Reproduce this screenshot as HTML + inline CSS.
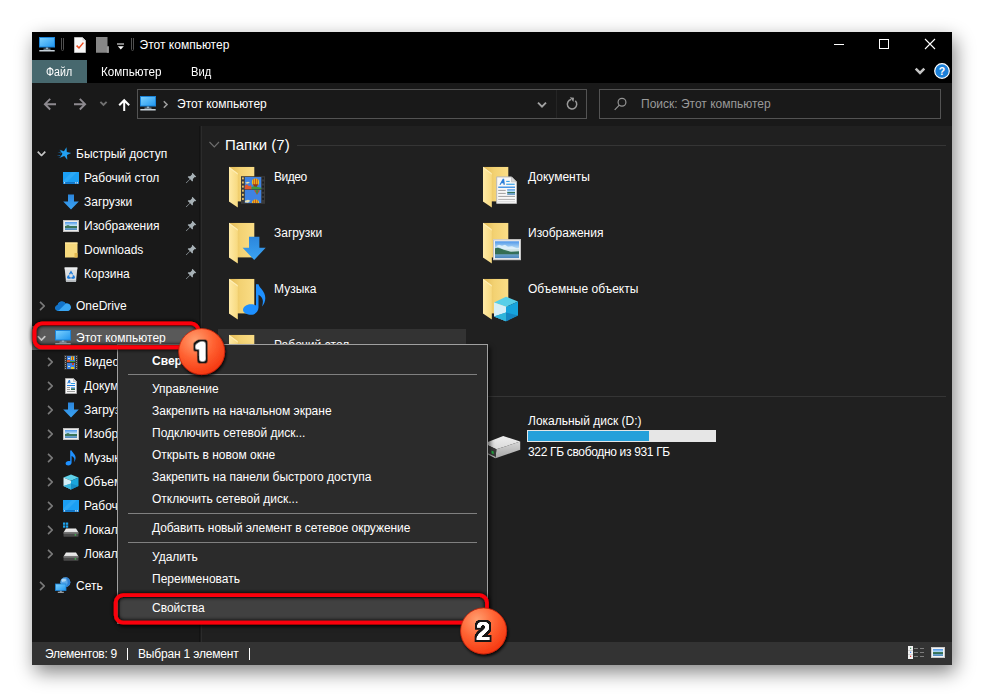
<!DOCTYPE html>
<html lang="ru">
<head>
<meta charset="utf-8">
<title>Этот компьютер</title>
<style>
html,body{margin:0;padding:0;}
body{width:984px;height:697px;background:#fff;position:relative;overflow:hidden;font-family:"Liberation Sans",sans-serif;font-size:12px;color:#fff;}
.t{position:absolute;white-space:nowrap;line-height:14px;color:#fff;}
#shadow{position:absolute;left:32px;top:32px;width:920px;height:633px;box-shadow:3px 7px 18px rgba(0,0,0,.49);}
#win{position:absolute;left:32px;top:32px;width:920px;height:633px;background:#202020;overflow:hidden;}
#titlebar{position:absolute;left:0;top:0;width:920px;height:51px;background:#000;}
#filetab{position:absolute;left:0;top:28px;width:55px;height:23px;background:#47686e;}
#addr{position:absolute;left:0;top:51px;width:920px;height:43px;background:#191919;}
#abox{position:absolute;left:105px;top:57px;width:450px;height:30px;border:1px solid #535353;box-sizing:border-box;}
#abox i{position:absolute;left:418px;top:0;width:1px;height:28px;background:#252525;}
#sbox{position:absolute;left:567px;top:57px;width:342px;height:30px;border:1px solid #535353;box-sizing:border-box;}
#nav{position:absolute;left:0;top:94px;width:167px;height:516px;background:#191919;}
#navsel{position:absolute;left:0;top:294px;width:169px;height:24px;background:#595959;}
#split{position:absolute;left:167px;top:94px;width:3px;height:516px;background:linear-gradient(to right,#131313 0,#131313 1px,#1c1c1c 1px,#1c1c1c 2px,#2b2b2b 2px,#2b2b2b 3px);}
#content{position:absolute;left:170px;top:94px;width:750px;height:516px;background:#202020;}
.gl{position:absolute;height:1px;background:#353535;}
#hov{position:absolute;left:186px;top:297px;width:248px;height:40px;background:#333;}
#bar{position:absolute;left:495px;top:398px;width:189px;height:12px;background:#e6e6e6;}
#bar i{position:absolute;left:1px;top:1px;width:121px;height:10px;background:#26a0da;}
#status{position:absolute;left:0;top:610px;width:920px;height:23px;background:#333;}
#menu{position:absolute;left:117px;top:344px;width:371px;height:280px;background:#2b2b2b;border:1px solid #a0a0a0;box-sizing:border-box;box-shadow:3px 3px 4px rgba(0,0,0,.5);}
#msel{position:absolute;left:2px;top:253px;width:365px;height:23px;background:#414141;}
.sep{position:absolute;left:10px;width:349px;height:1px;background:#808080;}
.mi{position:absolute;left:34px;white-space:nowrap;line-height:14px;color:#fff;}
#ico{position:absolute;left:0;top:0;}
.num{font-family:"Liberation Sans",sans-serif;font-weight:bold;font-size:25px;fill:#fff;}
</style>
</head>
<body>
<div id="shadow"></div>
<div id="win">
  <div id="titlebar"></div>
  <div id="filetab"></div>
  <div id="addr"></div>
  <div id="abox"><i></i></div>
  <div id="sbox"></div>
  <div id="nav"></div>
  <div id="navsel"></div>
  <div id="split"></div>
  <div id="content"></div>
  <div class="gl" style="left:265px;top:113px;width:649px;"></div>
  <div class="gl" style="left:400px;top:364px;width:514px;"></div>
  <div id="hov"></div>
  <div id="bar"><i></i></div>
  <div id="status"></div>
</div>
<!--TEXT-->
<div class="t" style="left:139.600px;top:38px;">Этот компьютер</div>
<div class="t" style="left:46px;top:65px;transform:scaleX(0.885);transform-origin:0 0;">Файл</div>
<div class="t" style="left:101px;top:65px;transform:scaleX(0.975);transform-origin:0 0;">Компьютер</div>
<div class="t" style="left:191px;top:65px;transform:scaleX(0.93);transform-origin:0 0;">Вид</div>
<div class="t" style="left:177px;top:97px;">Этот компьютер</div>
<div class="t" style="left:641px;top:97px;color:#9a9a9a;">Поиск: Этот компьютер</div>
<div class="t" style="left:76px;top:147px;">Быстрый доступ</div>
<div class="t" style="left:84px;top:171px;">Рабочий стол</div>
<div class="t" style="left:84px;top:195px;">Загрузки</div>
<div class="t" style="left:84px;top:219px;">Изображения</div>
<div class="t" style="left:84px;top:243px;">Downloads</div>
<div class="t" style="left:84px;top:267px;">Корзина</div>
<div class="t" style="left:76px;top:299px;">OneDrive</div>
<div class="t" style="left:76px;top:331px;">Этот компьютер</div>
<div class="t" style="left:84px;top:355px;">Видео</div>
<div class="t" style="left:84px;top:379px;">Документы</div>
<div class="t" style="left:84px;top:403px;">Загрузки</div>
<div class="t" style="left:84px;top:427px;">Изображения</div>
<div class="t" style="left:84px;top:451px;">Музыка</div>
<div class="t" style="left:84px;top:475px;">Объемные объекты</div>
<div class="t" style="left:84px;top:499px;">Рабочий стол</div>
<div class="t" style="left:84px;top:523px;">Локальный диск (C:)</div>
<div class="t" style="left:84px;top:547px;">Локальный диск (D:)</div>
<div class="t" style="left:76px;top:579px;">Сеть</div>
<div class="t" style="left:225px;top:136px;font-size:15px;line-height:18px;">Папки (7)</div>
<div class="t" style="left:274px;top:170px;letter-spacing:-0.5px;">Видео</div>
<div class="t" style="left:274px;top:226px;">Загрузки</div>
<div class="t" style="left:274px;top:282px;">Музыка</div>
<div class="t" style="left:274px;top:338px;">Рабочий стол</div>
<div class="t" style="left:528px;top:170px;">Документы</div>
<div class="t" style="left:528px;top:226px;">Изображения</div>
<div class="t" style="left:528px;top:282px;">Объемные объекты</div>
<div class="t" style="left:528px;top:414px;">Локальный диск (D:)</div>
<div class="t" style="left:528px;top:445px;letter-spacing:-0.33px;">322 ГБ свободно из 931 ГБ</div>
<div class="t" style="left:45px;top:647px;letter-spacing:-0.27px;">Элементов: 9</div>
<div class="t" style="left:138px;top:647px;letter-spacing:-0.18px;">Выбран 1 элемент</div>
<div style="position:absolute;left:127px;top:648px;width:1px;height:12px;background:#fff;"></div>
<div style="position:absolute;left:249px;top:648px;width:1px;height:12px;background:#fff;"></div>
<!--/TEXT-->
<!--ICONS1-->
<svg id="ico" width="984" height="697" viewBox="0 0 984 697">
<defs>
  <linearGradient id="gScr" x1="0" y1="0" x2="1" y2="1"><stop offset="0" stop-color="#7fd3ff"/><stop offset="1" stop-color="#1f95ee"/></linearGradient>
  <linearGradient id="gBack" x1="0" y1="0" x2="1" y2="0"><stop offset="0" stop-color="#e2b954"/><stop offset="0.45" stop-color="#f3d273"/><stop offset="1" stop-color="#fadd86"/></linearGradient>
  <linearGradient id="gFlap" x1="0" y1="0" x2="1" y2="0"><stop offset="0" stop-color="#ffeaa6"/><stop offset="1" stop-color="#f7d97f"/></linearGradient>
  <linearGradient id="gArr" x1="0" y1="0" x2="0" y2="1"><stop offset="0" stop-color="#2c86dc"/><stop offset="1" stop-color="#3aa3f3"/></linearGradient>
  <linearGradient id="gSky" x1="0" y1="0" x2="0" y2="1"><stop offset="0" stop-color="#4f97ea"/><stop offset="0.45" stop-color="#bfe2f5"/><stop offset="0.5" stop-color="#3f7a5a"/><stop offset="0.72" stop-color="#2f6a58"/><stop offset="0.76" stop-color="#6fa4c8"/><stop offset="1" stop-color="#4a86bd"/></linearGradient>
  <radialGradient id="gBadge" cx="0.36" cy="0.26" r="0.8"><stop offset="0" stop-color="#ff9f70"/><stop offset="0.5" stop-color="#ff6232"/><stop offset="1" stop-color="#f4340e"/></radialGradient>
  <linearGradient id="gDrvSide" x1="0" y1="0" x2="0" y2="1"><stop offset="0" stop-color="#d6d6d6"/><stop offset="1" stop-color="#a6a6a6"/></linearGradient>
  <linearGradient id="gDrvTop" x1="0" y1="0" x2="0" y2="1"><stop offset="0" stop-color="#efefef"/><stop offset="1" stop-color="#dadada"/></linearGradient>
  <filter id="fSh" x="-10%" y="-40%" width="120%" height="180%"><feGaussianBlur in="SourceAlpha" stdDeviation="2.3"/><feComponentTransfer><feFuncA type="linear" slope="1.3"/></feComponentTransfer><feMerge><feMergeNode/><feMergeNode in="SourceGraphic"/></feMerge></filter>
  <clipPath id="cOne"><path d="M192.90 337.80H204.14V360.80H200.83V356.65H192.90Z"/></clipPath>
  <filter id="fNum1" x="-40%" y="-30%" width="180%" height="170%"><feGaussianBlur in="SourceAlpha" stdDeviation="1" result="b2"/><feComponentTransfer in="b2" result="w"><feFuncA type="linear" slope="5.700" intercept="-0.064"/></feComponentTransfer><feMorphology in="w" operator="dilate" radius="1.550" result="o"/><feGaussianBlur in="o" stdDeviation="0.350" result="ob"/><feFlood flood-color="#121212"/><feComposite in2="ob" operator="in" result="blk"/><feFlood flood-color="#fff"/><feComposite in2="w" operator="in" result="wht"/><feMerge><feMergeNode in="blk"/><feMergeNode in="wht"/></feMerge></filter>
  <filter id="fNum" x="-40%" y="-30%" width="180%" height="170%"><feGaussianBlur in="SourceAlpha" stdDeviation="0.700" result="b2"/><feComponentTransfer in="b2" result="w"><feFuncA type="linear" slope="3" intercept="-0.200"/></feComponentTransfer><feMorphology in="w" operator="dilate" radius="1.550" result="o"/><feGaussianBlur in="o" stdDeviation="0.350" result="ob"/><feFlood flood-color="#121212"/><feComposite in2="ob" operator="in" result="blk"/><feFlood flood-color="#fff"/><feComposite in2="w" operator="in" result="wht"/><feMerge><feMergeNode in="blk"/><feMergeNode in="wht"/></feMerge></filter>
  <filter id="fBd" x="-30%" y="-30%" width="160%" height="160%"><feGaussianBlur in="SourceAlpha" stdDeviation="1.8" result="b"/><feOffset in="b" dx="0.5" dy="1.5"/><feComponentTransfer><feFuncA type="linear" slope="0.9"/></feComponentTransfer><feMerge><feMergeNode/><feMergeNode in="SourceGraphic"/></feMerge></filter>

  <symbol id="pc" viewBox="0 0 16 16"><rect x="0.5" y="0.5" width="15" height="9.5" fill="url(#gScr)" stroke="#1b84d9"/><rect x="6.8" y="10.5" width="2.4" height="1.6" fill="#8fa9bd"/><rect x="4.5" y="11.7" width="7" height="0.9" fill="#a9c0d0"/><rect x="0.3" y="13" width="15.4" height="1.5" fill="#c5d0d8"/></symbol>
  <symbol id="desk" viewBox="0 0 16 16"><rect x="0" y="2" width="16" height="12" fill="#1b9ff4"/><path d="M9 2H14L4 12H0V11Z" fill="#3aaef8" opacity="0.55"/><rect x="0" y="12" width="16" height="2" fill="#1683d6"/><rect x="1.2" y="12.4" width="13.6" height="0.9" fill="#0f6dbd"/><rect x="1" y="12.3" width="1.1" height="1.1" fill="#fff"/><rect x="12.2" y="12.3" width="1.1" height="1.1" fill="#fff"/><rect x="13.9" y="12.3" width="1.1" height="1.1" fill="#fff"/></symbol>
  <symbol id="dl" viewBox="0 0 16 16"><path d="M5 0.5H11V7.5H15.8L8 15.5L0.2 7.5H5Z" fill="url(#gArr)"/></symbol>
  <symbol id="pic" viewBox="0 0 16 16"><rect x="0" y="2" width="16" height="12" fill="#ececec"/><rect x="0.5" y="2.5" width="15" height="11" fill="none" stroke="#bdbdbd"/><rect x="2" y="4" width="12" height="8" fill="url(#gSky)"/><path d="M2 8.2 5 7 8 8.6 14 9.8V10H2Z" fill="#3c7458"/></symbol>
  <symbol id="fold" viewBox="0 0 16 16"><rect x="2" y="0.5" width="12.5" height="15" fill="#f7da7e"/><rect x="2" y="0.5" width="12.5" height="1.2" fill="#ffe9a4"/><path d="M11.5 15.5V11H14.5V15.5Z" fill="#e3b94f"/></symbol>
  <symbol id="bin" viewBox="0 0 16 16"><path d="M1.600 1.600H14.400L13 15.800H3Z" fill="#dcdfe1"/><path d="M1.600 1.600H14.400L14.200 3.400H1.800Z" fill="#eceeef"/><path d="M3 15.800H13L13.200 14H2.800Z" fill="#b9bec2"/><path d="M8 4.600 10.300 8.200 8.900 8.400 8 6.900 7.100 8.400 5.700 8.200Z" fill="#1c7bdc"/><path d="M5 9.200 6.600 9.400 6.100 10.800 7.600 10.900V12.700H4.700L3.900 11.200Z" fill="#1c7bdc"/><path d="M11 9.200 9.400 9.400 9.900 10.800 8.400 10.900V12.700H11.300L12.100 11.200Z" fill="#1c7bdc"/></symbol>
  <symbol id="cloud" viewBox="0 0 16 16"><path d="M3.4 13.5C1.5 13.5 0.2 12.2 0.2 10.6 0.2 9.2 1.2 8 2.6 7.8 2.9 5.6 4.7 4 6.9 4 8.5 4 9.9 4.9 10.6 6.2 11 6.1 11.4 6 11.8 6 14 6 15.8 7.700 15.800 9.8 15.8 11.9 14.2 13.5 12.2 13.5Z" fill="#1c8ee6"/><path d="M0.2 10.6C0.2 9.2 1.2 8 2.6 7.8 2.9 5.6 4.700 4 6.9 4 8.5 4 9.9 4.9 10.6 6.2L4 12.800C2 13.400 0.200 12.200 0.200 10.600Z" fill="#1273c9"/><path d="M3.400 13.500 10.600 6.200C11 6.100 11.400 6 11.800 6 14 6 15.800 7.700 15.800 9.800 15.800 11.900 14.200 13.500 12.200 13.500Z" fill="#3aa6f2"/></symbol>
  <symbol id="vid" viewBox="0 0 16 16"><rect x="1" y="1" width="14" height="14.700" fill="#353535"/><rect x="4" y="2" width="8" height="6" fill="#3f83e3"/><rect x="4" y="9" width="8" height="6" fill="#3f83e3"/><rect x="8" y="2.500" width="3" height="3.500" fill="#e8c81e"/><rect x="9" y="2.500" width="1" height="3.500" fill="#b8421c"/><rect x="4" y="6" width="3" height="2" fill="#e0582e"/><rect x="7" y="7" width="5" height="1" fill="#3f9a3c"/><rect x="5" y="4" width="2" height="1" fill="#cfe3f3"/><rect x="9" y="9" width="2" height="2" fill="#c8462a"/><rect x="8" y="13" width="3" height="2" fill="#e8c81e"/><rect x="5" y="12" width="2" height="1" fill="#d9e2c0"/><g fill="#9a9a9a"><rect x="2" y="2" width="1" height="1"/><rect x="13" y="2" width="1" height="1"/><rect x="2" y="4" width="1" height="1"/><rect x="13" y="4" width="1" height="1"/><rect x="2" y="6" width="1" height="1"/><rect x="13" y="6" width="1" height="1"/><rect x="2" y="8" width="1" height="1"/><rect x="13" y="8" width="1" height="1"/><rect x="2" y="10" width="1" height="1"/><rect x="13" y="10" width="1" height="1"/><rect x="2" y="12" width="1" height="1"/><rect x="13" y="12" width="1" height="1"/><rect x="2" y="14" width="1" height="1"/><rect x="13" y="14" width="1" height="1"/></g></symbol>
  <symbol id="doc" viewBox="0 0 16 16"><path d="M2.500 0.500H10.500L13.500 3.500V15.500H2.500Z" fill="#f8f8f8" stroke="#a9a9a9"/><path d="M10.500 0.500V3.500H13.500Z" fill="#dcdcdc" stroke="#a9a9a9" stroke-width="0.600"/><path d="M4.200 5.600 5.800 2H7L7.600 5.600H6.600L6.500 4.800H5.500L5.200 5.600Z" fill="#2b7fd9"/><rect x="8" y="5" width="4" height="1" fill="#2b9be6"/><rect x="4" y="7" width="8" height="1" fill="#1f7fe0"/><rect x="4" y="9" width="3" height="1" fill="#9c9c9c"/><rect x="4" y="11" width="3" height="1" fill="#9c9c9c"/><rect x="4" y="13" width="8" height="1" fill="#9c9c9c"/><rect x="8" y="9" width="4" height="3" fill="#2f6b4f"/><rect x="8" y="9" width="4" height="1.500" fill="#7ab4ee"/></symbol>
  <symbol id="music" viewBox="0 0 16 16"><path d="M7.200 0.500H8.600C9.200 2.800 12.600 4.200 12.600 7.800 12.600 9.600 11.900 11 10.900 12.200 11.500 10.700 11.600 9.200 11 8 10.500 7 9.600 6.300 8.600 5.900V12.600C8.600 14.300 7 15.600 5.200 15.600 3.700 15.600 2.600 14.800 2.600 13.600 2.600 12.200 4 11 5.700 11 6.300 11 6.800 11.100 7.200 11.300Z" fill="#1e90ff"/></symbol>
  <symbol id="cube" viewBox="0 0 16 16"><path d="M8 0.500 15.500 3.500 8 6.800 0.500 3.500Z" fill="#5fd2ea"/><path d="M0.500 3.500 8 6.800V15.500L0.500 12Z" fill="#d3eef7"/><path d="M8 6.800 15.500 3.500V12L8 15.500Z" fill="#1aa6de"/><path d="M0.500 12 8 9.500 15.500 12 8 15.500Z" fill="#1789c4" opacity="0.850"/><path d="M0.500 12 8 9.500V15.500Z" fill="#38b8dd" opacity="0.900"/></symbol>
  <symbol id="drv" viewBox="0 0 16 16"><path d="M3 6.500H13L15.500 10.500H0.500Z" fill="url(#gDrvTop)"/><rect x="0.500" y="10.500" width="15" height="4.200" rx="0.600" fill="#4a4a4a"/><rect x="0.500" y="10.500" width="15" height="1" fill="#8a8a8a"/><rect x="11.700" y="12.300" width="1.500" height="1.200" fill="#37d24a"/></symbol>
  <symbol id="drvw" viewBox="0 0 16 16"><use href="#drv"/><g fill="#1ea4ef"><rect x="0" y="0.500" width="2.300" height="2.300"/><rect x="2.900" y="0.500" width="2.300" height="2.300"/><rect x="0" y="3.400" width="2.300" height="2.300"/><rect x="2.900" y="3.400" width="2.300" height="2.300"/></g></symbol>
  <symbol id="net" viewBox="0 0 16 16"><circle cx="10.300" cy="5.300" r="5" fill="#5aa8e8"/><path d="M10.300 0.300A5 5 0 0 1 15.300 5.300 5 5 0 0 1 10.300 10.300C12 8.800 12.600 7 12.600 5.300 12.600 3.600 12 1.800 10.300 0.300Z" fill="#2f7fd0"/><path d="M6.500 2.500C8 1.600 9.500 2.600 10.800 2.200 11.600 3.400 10.200 4.800 8.600 4.600 7.600 5.400 6.500 4.600 6.500 2.500Z" fill="#bfe0f7" opacity="0.850"/><rect x="0.500" y="7" width="10.500" height="6.500" fill="url(#gScr)" stroke="#1b84d9" stroke-width="0.800"/><rect x="4.800" y="13.700" width="2" height="1.100" fill="#8fa9bd"/><rect x="2.800" y="14.800" width="6" height="0.900" fill="#c8d3db"/></symbol>
  <symbol id="pin" viewBox="0 0 10 10"><path d="M6.200 0.300 9.700 3.800 8.900 4.300 8.300 4.100 6.600 5.800 6.700 7.400 6 8.100 4.100 6.200 0.600 9.700 0.300 9.400 3.800 5.900 1.900 4 2.600 3.300 4.200 3.400 5.900 1.700 5.700 1.100Z" fill="#a7b1b6"/></symbol>
  <symbol id="star" viewBox="0 0 16 16" overflow="visible"><g transform="rotate(14 9.6 7.8)"><path d="M9.6 0.4 11.3 5.5H16.4L12.3 8.600 13.900 13.800 9.600 10.600 5.300 13.800 6.900 8.600 2.800 5.500H7.900Z" fill="#22a0f2"/></g><path d="M3.200 3.200 7 4.600 6.700 5.300Z M1.200 6.200 5.400 6.900 5.200 7.700Z M0.200 9.800 4.300 9.300 4.300 10.100Z M1.800 12.800 4.800 11 5 11.700Z" fill="#1b86d8"/></symbol>
  <symbol id="bigfold" viewBox="0 0 42 42"><rect x="0" y="0" width="25.300" height="34.600" fill="url(#gBack)"/><path d="M0 0 8.800 6.500V40.600L0 34.800Z" fill="url(#gFlap)"/><path d="M0 0 8.800 6.500V8L0 1.300Z" fill="#fff3c4" opacity="0.700"/></symbol>
  <symbol id="chr" viewBox="0 0 6 10"><path d="M0.800 0.800 5 5 0.800 9.200" fill="none" stroke="currentColor" stroke-width="1.700"/></symbol>
  <symbol id="chd" viewBox="0 0 10 6"><path d="M0.800 0.800 5 5 9.200 0.800" fill="none" stroke="currentColor" stroke-width="1.900"/></symbol>
</defs>
<!-- title bar -->
<use href="#pc" x="39" y="37" width="16" height="16"/>
<path d="M61.500 38V49.500Q61.500 50.500 62.500 50.500Q63.500 50.500 63.500 49.500V38" fill="none" stroke="#505050" stroke-width="1"/>
<g transform="translate(74,37)"><path d="M0.500 0.500H8.500L11.500 3.500V15.500H0.500Z" fill="#f7f7f7" stroke="#b9b9b9"/><path d="M8.500 0.500V3.500H11.500Z" fill="#d0d0d0"/><path d="M2.600 8.600 5 11 9.400 5.600" fill="none" stroke="#ef4b1f" stroke-width="1.500"/></g>
<g transform="translate(96,37)"><path d="M0 0H11.500V9H12.800V15.800H0Z" fill="#878787"/><path d="M10.800 15.800V10H12.800V15.800Z" fill="#9a9a9a"/></g>
<rect x="117" y="43.500" width="7" height="1" fill="#fff"/><path d="M117.800 46.300H123.800L120.800 49.400Z" fill="#fff"/>
<path d="M131.500 38V49.500Q131.500 50.500 132.500 50.500Q133.500 50.500 133.500 49.500V38" fill="none" stroke="#505050" stroke-width="1"/>
<rect x="834" y="44" width="10" height="1" fill="#fff"/>
<rect x="879.500" y="39.500" width="9" height="9" fill="none" stroke="#fff"/>
<path d="M925 39 935 49M935 39 925 49" stroke="#fff" stroke-width="1.100" fill="none"/>
<path d="M915.700 68.600 920 72.900 924.300 68.600" fill="none" stroke="#c4c4c4" stroke-width="2.500"/>
<circle cx="942" cy="71" r="7.300" fill="#1c80d8" stroke="#fff" stroke-width="1.200"/>
<text x="942" y="74.800" text-anchor="middle" font-family="Liberation Sans, sans-serif" font-weight="bold" font-size="10.500" fill="#fff">?</text>
<!-- address row -->
<path d="M56 104.200H45.500M50.200 98.900 44.900 104.200 50.200 109.500" fill="none" stroke="#8e8a90" stroke-width="1.900"/>
<path d="M74 104.200H84.500M79.800 98.900 85.100 104.200 79.800 109.500" fill="none" stroke="#8e8a90" stroke-width="1.900"/>
<path d="M100.400 101.800 103.500 104.900 106.600 101.800" fill="none" stroke="#707070" stroke-width="1.900"/>
<path d="M124.200 111V100.500M119.200 105.200 124.200 100.200 129.200 105.200" fill="none" stroke="#fff" stroke-width="2"/>
<use href="#pc" x="140" y="96" width="16" height="16"/>
<path d="M163.800 101.300 167 104.500 163.800 107.700" fill="none" stroke="#9c9c9c" stroke-width="1.600"/>
<path d="M538 102.700 542 106.700 546 102.700" fill="none" stroke="#a2a2a2" stroke-width="1.900"/>
<path d="M575.300 100.800A4.700 4.700 0 1 1 571 99.600" fill="none" stroke="#9a9a9a" stroke-width="1.500"/><path d="M569.500 97.500H573.800V101.800Z" fill="#9a9a9a" transform="rotate(8 572 99.500)"/>
<circle cx="622" cy="102.300" r="3.900" fill="none" stroke="#959595" stroke-width="1.200"/><path d="M619.300 105.200 614.700 109.800" stroke="#959595" stroke-width="1.200"/>
<!-- nav -->
<g color="#c6c6c6"><use href="#chd" x="37" y="151" width="9" height="5.400"/><use href="#chd" x="37" y="335.500" width="9" height="5.400"/></g>
<g color="#7a7a7a"><use href="#chr" x="39.200" y="301.0" width="6" height="10"/><use href="#chr" x="39.200" y="581.0" width="6" height="10"/>
<use href="#chr" x="47.200" y="357.0" width="6" height="10"/><use href="#chr" x="47.200" y="381.0" width="6" height="10"/><use href="#chr" x="47.200" y="405.0" width="6" height="10"/><use href="#chr" x="47.200" y="429.0" width="6" height="10"/><use href="#chr" x="47.200" y="453.0" width="6" height="10"/><use href="#chr" x="47.200" y="477.0" width="6" height="10"/><use href="#chr" x="47.200" y="501.0" width="6" height="10"/><use href="#chr" x="47.200" y="525.0" width="6" height="10"/><use href="#chr" x="47.200" y="549.0" width="6" height="10"/></g>
<use href="#star" x="56.500" y="146.800" width="14" height="14"/>
<use href="#desk" x="63" y="170" width="16" height="16"/>
<use href="#dl" x="63" y="194" width="16" height="16"/>
<use href="#pic" x="63" y="218" width="16" height="16"/>
<use href="#fold" x="63" y="242" width="16" height="16"/>
<use href="#bin" x="63" y="266" width="16" height="16"/>
<use href="#cloud" x="55" y="297.500" width="16" height="16"/>
<use href="#pc" x="55" y="330" width="16" height="16"/>
<use href="#vid" x="63" y="354" width="16" height="16"/>
<use href="#doc" x="63" y="378" width="16" height="16"/>
<use href="#dl" x="63" y="402" width="16" height="16"/>
<use href="#pic" x="63" y="426" width="16" height="16"/>
<use href="#music" x="63" y="450" width="16" height="16"/>
<use href="#cube" x="63" y="474" width="16" height="16"/>
<use href="#desk" x="63" y="498" width="16" height="16"/>
<use href="#drvw" x="63" y="522" width="16" height="16"/>
<use href="#drv" x="63" y="546" width="16" height="16"/>
<use href="#net" x="55" y="577" width="16" height="16"/>
<use href="#pin" x="185.600" y="172.5" width="11" height="11"/><use href="#pin" x="185.600" y="196.5" width="11" height="11"/><use href="#pin" x="185.600" y="220.5" width="11" height="11"/><use href="#pin" x="185.600" y="244.5" width="11" height="11"/><use href="#pin" x="185.600" y="268.5" width="11" height="11"/>
<!-- content -->
<path d="M209.500 142 214.300 147 219 142" fill="none" stroke="#6e6e6e" stroke-width="1.100"/>
<use href="#bigfold" x="229" y="166.800" width="42" height="42"/>
<use href="#bigfold" x="229" y="222.800" width="42" height="42"/>
<use href="#bigfold" x="229" y="278.800" width="42" height="42"/>
<use href="#bigfold" x="229" y="334.800" width="42" height="42"/>
<use href="#bigfold" x="483" y="166.800" width="42" height="42"/>
<use href="#bigfold" x="483" y="222.800" width="42" height="42"/>
<use href="#bigfold" x="483" y="278.800" width="42" height="42"/>
<!-- video overlay -->
<g transform="translate(241,176.200)"><rect width="24" height="27.600" fill="#3a3a3a"/><rect x="3.800" y="0.800" width="16.400" height="12.200" fill="#3f83e3"/><rect x="3.800" y="13.800" width="16.400" height="13" fill="#3f83e3"/><circle cx="14.500" cy="6" r="3.600" fill="#f0c01f"/><path d="M11.800 8 17.200 8 14.500 12.500Z" fill="#8a3a1a"/><path d="M12.700 3 12.700 9M14.500 2.400V9.400M16.300 3V9" stroke="#b5301a" stroke-width="0.700"/><path d="M3.800 9.500 6 8 8 10 10 9 11 13H3.800Z" fill="#e0582e"/><path d="M10.500 11 12.500 10 20.200 11.500V13H10.500Z" fill="#3f9a3c"/><path d="M4 6.500 7 5.500 9 6.500 6 7.500Z" fill="#f3e3a0"/><path d="M13 14 19 14 16 18.500Z" fill="#d84428"/><path d="M14.500 14 17.500 14 16 18.500Z" fill="#2f9a4a"/><path d="M10.900 26.800A3.600 3.600 0 0 1 18.100 26.800Z" fill="#f0c01f"/><path d="M12.700 24V26.800M14.500 23.300V26.800M16.300 24V26.800" stroke="#b5301a" stroke-width="0.700"/><path d="M4 24.500 7 23.500 9.500 24.500 7 26.500 4 26Z" fill="#e9dfb0"/>
<g fill="#e8c36a"><rect x="1" y="1.200" width="1.800" height="2"/><rect x="1" y="5.300" width="1.800" height="2"/><rect x="1" y="9.400" width="1.800" height="2"/><rect x="1" y="13.500" width="1.800" height="2"/><rect x="1" y="17.600" width="1.800" height="2"/><rect x="1" y="21.700" width="1.800" height="2"/></g><g fill="#1e1e1e"><rect x="21.200" y="1.200" width="1.800" height="2"/><rect x="21.200" y="5.300" width="1.800" height="2"/><rect x="21.200" y="9.400" width="1.800" height="2"/><rect x="21.200" y="13.500" width="1.800" height="2"/><rect x="21.200" y="17.600" width="1.800" height="2"/><rect x="21.200" y="21.700" width="1.800" height="2"/></g></g>
<!-- downloads arrow -->
<path d="M249 236.700H259.400V247.700H265.700L254.200 260 242.600 247.700H249Z" fill="url(#gArr)"/>
<!-- music note -->
<path d="M256 284.300H258.500C259.500 288.500 265.300 291 265.300 298 265.300 301.500 264 304.300 262 306.500 263 303.700 263.300 300.800 262.200 298.500 261.400 296.800 260 295.500 258.500 294.800V307.500C258.500 311.500 255 314.800 251 314.800 247.500 314.800 243 313 243 309.800 243 306.800 246.500 304.300 250.800 304.300 252.800 304.300 254.800 304.800 256 305.500Z" fill="#1e90ff"/>
<!-- documents overlay -->
<g transform="translate(496.200,176.400)"><path d="M0.500 0.500H15.300L20.300 5.500V27H0.500Z" fill="#f8f8f8" stroke="#b8b8b8"/><path d="M15.300 0.500V5.500H20.300Z" fill="#d9d9d9" stroke="#b8b8b8" stroke-width="0.600"/><path d="M3.200 8.300 6.600 2.300H7.900L8.700 8.300H7.300L7.100 6.800H5.300L4.600 8.300Z" fill="#2b7fd9"/><rect x="10" y="4.500" width="3.500" height="1" fill="#2b9be6"/><rect x="10" y="7.300" width="8.500" height="1.100" fill="#2b9be6"/><rect x="2" y="10.200" width="16.800" height="1.200" fill="#1f7fe0"/><rect x="2" y="13.500" width="7.500" height="1" fill="#a0a0a0"/><rect x="2" y="16.500" width="7.500" height="1" fill="#a0a0a0"/><rect x="2" y="19.500" width="16.800" height="1" fill="#a0a0a0"/><rect x="2" y="22.500" width="16.800" height="1" fill="#b0b0b0"/><rect x="2" y="25" width="16.800" height="0.600" fill="#d0d0d0"/><rect x="11" y="12.800" width="7.800" height="5.600" fill="url(#gSky)"/></g>
<!-- pictures overlay -->
<g transform="translate(493,239.300)"><rect width="28" height="20.800" fill="#f0f0f0"/><rect x="0.500" y="0.500" width="27" height="19.800" fill="none" stroke="#c4c4c4"/><rect x="2" y="2" width="24" height="16.800" fill="url(#gSky)"/><path d="M2 9 5 8.500 8.500 9.500 12 12.500 20 14 26 14.500V15H2Z" fill="#356e52"/><path d="M3 7 6 5.500 9 6.500 12 5.500 15 7.500 19 7 24 9 26 8.500V12L18 12.500 11 10.500 7 8.500Z" fill="#e4f3fa" opacity="0.850"/></g>
<!-- cube overlay -->
<g transform="translate(494,296.800)"><path d="M12 0 24 4.600 12 10 0 5.600Z" fill="#58cfe8"/><path d="M0 5.600 12 10V24.500L0 19.700Z" fill="#d6eff8"/><path d="M12 10 24 4.600V18.800L12 24.500Z" fill="#16a3dc"/><path d="M0 19.700 12 15.800 24 18.800 12 24.500Z" fill="#1583bf" opacity="0.900"/><path d="M0 19.700 12 15.800V24.500Z" fill="#2fb4db"/></g>
<!-- drive D -->
<path d="M484 443.500 503.200 435.900 520.200 441.600 496.400 449.300Z" fill="url(#gDrvTop)"/>
<path d="M496.400 449.300 520.200 441.600V449.700L495.500 458.200Z" fill="url(#gDrvSide)"/>
<path d="M484 443.500 496.400 449.300 495.500 458.200 484 452.500Z" fill="#3a3a3a"/>
<path d="M484 451.300 495.600 457 495.500 458.200 484 452.500Z" fill="#bdbdbd"/>
<path d="M491.500 450.600 493.600 451.600V454.300L491.500 453.300Z" fill="#22b243"/>
<!-- status icons -->
<g><rect x="908" y="646" width="5" height="13" fill="#f2f2f2"/><rect x="908" y="650" width="5" height="0.600" fill="#bbb"/><rect x="908" y="654" width="5" height="0.600" fill="#bbb"/><rect x="910" y="647.700" width="1.200" height="1.200" fill="#3a8a5a"/><rect x="910" y="651.700" width="1.200" height="1.200" fill="#3a78e0"/><rect x="910" y="655.700" width="1.200" height="1.200" fill="#e02a2a"/><g fill="#7d7d7d"><rect x="914" y="648" width="4" height="1"/><rect x="920" y="648" width="4" height="1"/><rect x="914" y="652" width="4" height="1"/><rect x="920" y="652" width="4" height="1"/><rect x="914" y="656" width="4" height="1"/><rect x="920" y="656" width="4" height="1"/></g></g>
<g><rect x="931" y="647" width="14" height="11" fill="#f4f4f4"/><rect x="931.500" y="647.500" width="13" height="10" fill="none" stroke="#c9c9c9"/><rect x="933" y="649" width="10" height="7" fill="url(#gSky)"/></g>
</svg>
<!--/ICONS1-->
<!--MENU-->
<div id="menu">
  <div id="msel"></div>
  <div class="mi" style="top:9px;font-weight:bold;">Свернуть</div>
  <div class="sep" style="top:29px;"></div>
  <div class="mi" style="top:37px;">Управление</div>
  <div class="mi" style="top:59px;">Закрепить на начальном экране</div>
  <div class="mi" style="top:81px;">Подключить сетевой диск...</div>
  <div class="mi" style="top:103px;">Открыть в новом окне</div>
  <div class="mi" style="top:125px;">Закрепить на панели быстрого доступа</div>
  <div class="mi" style="top:147px;">Отключить сетевой диск...</div>
  <div class="sep" style="top:168px;"></div>
  <div class="mi" style="top:176px;letter-spacing:-0.06px;">Добавить новый элемент в сетевое окружение</div>
  <div class="sep" style="top:197px;"></div>
  <div class="mi" style="top:205px;">Удалить</div>
  <div class="mi" style="top:227px;">Переименовать</div>
  <div class="mi" style="top:256px;">Свойства</div>
</div>
<!--/MENU-->
<!--ANN-->
<svg id="ann" style="position:absolute;left:0;top:0" width="984" height="697" viewBox="0 0 984 697">
<!-- annotations -->
<g filter="url(#fSh)"><rect x="34.450" y="323.450" width="164.100" height="23.800" rx="7.500" fill="none" stroke="#fb0207" stroke-width="3.800"/></g>
<g filter="url(#fSh)"><rect x="115.650" y="595.100" width="371.300" height="27.500" rx="7.500" fill="none" stroke="#fb0207" stroke-width="3.800"/></g>
<g filter="url(#fBd)"><circle cx="201.700" cy="351.600" r="23" fill="url(#gBadge)" stroke="#c9230a" stroke-width="0.800"/></g>
<g filter="url(#fNum1)"><text class="num" style="font-size:24px" clip-path="url(#cOne)" x="201.9" y="359.8" text-anchor="middle">1</text></g>
<g filter="url(#fBd)"><circle cx="483.600" cy="630.900" r="23" fill="url(#gBadge)" stroke="#c9230a" stroke-width="0.800"/></g>
<g filter="url(#fNum)"><text class="num" style="font-size:25.500px" x="483.200" y="639.500" text-anchor="middle">2</text></g>
</svg>
<!--/ANN-->
</body>
</html>
